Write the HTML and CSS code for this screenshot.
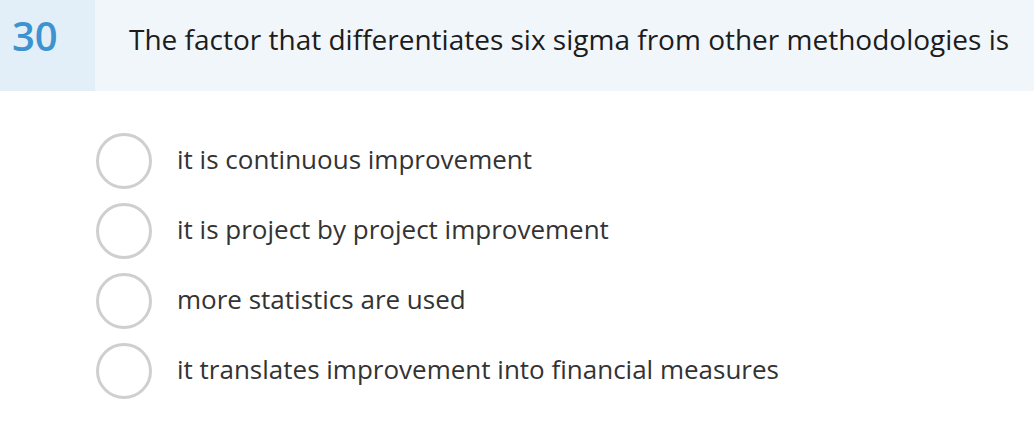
FILE: index.html
```html
<!DOCTYPE html>
<html>
<head>
<meta charset="utf-8">
<link rel="stylesheet" href="styles.css">
</head>
<body>
<div class="question">
  <div class="header">
    <div class="num">30</div>
    <div class="title">The factor that differentiates six sigma from other methodologies is</div>
  </div>
  <ul class="options">
    <li class="option"><span class="radio"></span><span class="label">it is continuous improvement</span></li>
    <li class="option"><span class="radio"></span><span class="label">it is project by project improvement</span></li>
    <li class="option"><span class="radio"></span><span class="label">more statistics are used</span></li>
    <li class="option"><span class="radio"></span><span class="label">it translates improvement into financial measures</span></li>
  </ul>
</div>
</body>
</html>
```
FILE: styles.css
```css
html, body { margin: 0; padding: 0; background: #fff; }
body { font-family: "Open Sans", "Noto Sans", sans-serif; width: 1034px; height: 434px; overflow: hidden; }
.header { display: flex; height: 91px; background: #f1f6fb; }
.num { width: 95px; background: #e3eff8; color: #3d92d0; font-size: 40px; font-weight: 600; line-height: 1; padding-left: 12px; padding-top: 16px; box-sizing: border-box; }
.title { font-size: 28px; color: #1c1c1c; padding-left: 34px; padding-top: 21px; line-height: 1.3; }
.options { list-style: none; margin: 0; padding: 42px 0 0 96px; display: flex; flex-direction: column; gap: 14px; }
.option { display: flex; align-items: center; height: 56px; }
.radio { width: 56px; height: 56px; box-sizing: border-box; border: 3px solid #cfcfcf; border-radius: 50%; flex: none; }
.label { margin-left: 25px; font-size: 26px; line-height: 1; color: #333; padding-bottom: 4px; }
```
